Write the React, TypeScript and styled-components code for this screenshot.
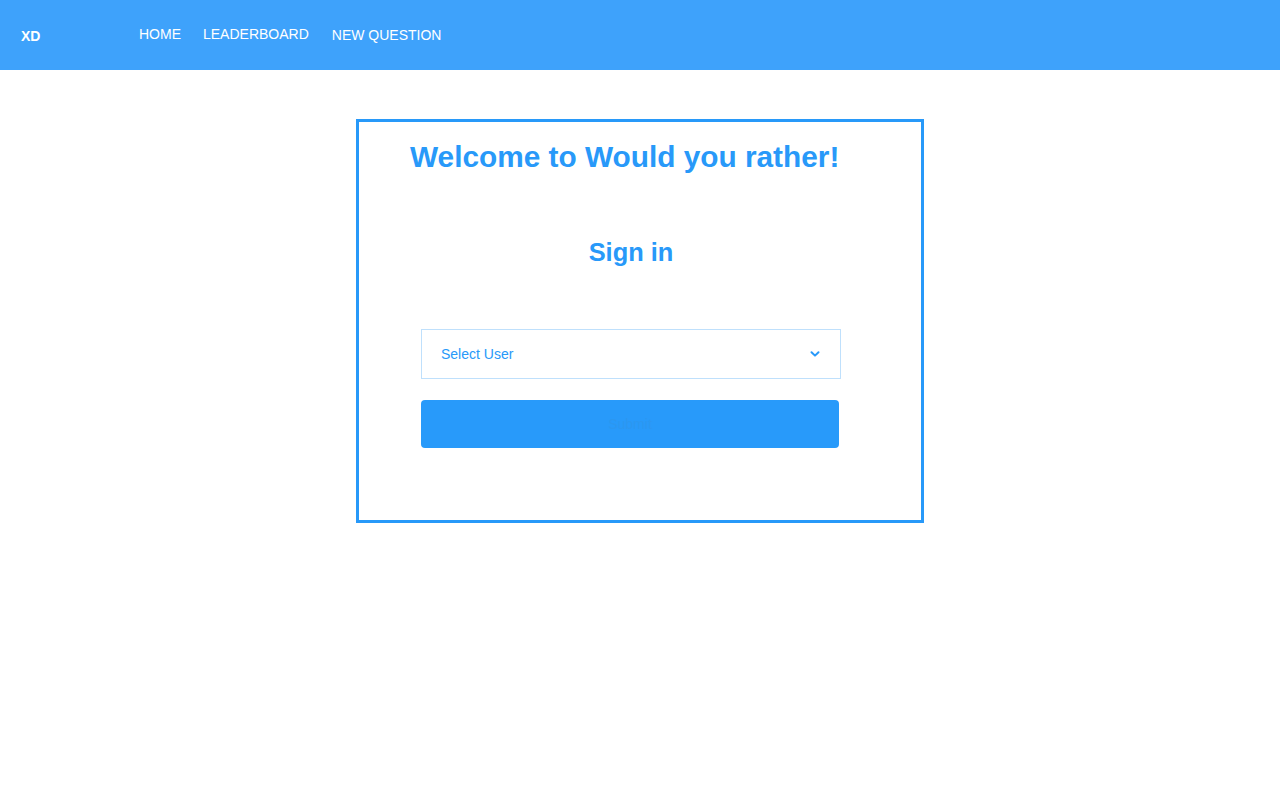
import React from "react";
import styled, { createGlobalStyle } from "styled-components";

const GlobalStyle = createGlobalStyle`
  html, body { margin: 0; padding: 0; background: #ffffff; }
  body { font-family: "Liberation Sans", Arial, Helvetica, sans-serif; }
  * { box-sizing: border-box; }
`;

const NavBar = styled.nav`
  height: 70px;
  background: #3ea2fb;
  display: flex;
  align-items: center;
  padding-left: 21px;
`;

const Logo = styled.div`
  width: 118px;
  color: #ffffff;
  font-weight: 700;
  font-size: 14px;
  line-height: 16px;
  padding-top: 1px;
`;

const NavLinks = styled.ul`
  display: flex;
  gap: 22px;
  list-style: none;
  margin: 0;
  padding: 0;
`;

const NavLink = styled.li<{ $dy?: number; $dx?: number }>`
  color: #ffffff;
  font-size: 14px;
  line-height: 16px;
  margin-top: ${(p) => p.$dy ?? 0}px;
  margin-left: ${(p) => p.$dx ?? 0}px;
  cursor: pointer;
`;

const Main = styled.main`
  display: flex;
  justify-content: center;
  padding-top: 49px;
`;

const Card = styled.section`
  width: 568px;
  height: 404px;
  border: 3px solid #2899f9;
  display: flex;
  flex-direction: column;
  padding-top: 18px;
`;

const Title = styled.h1`
  margin: 0 0 0 51px;
  color: #2899f9;
  font-size: 29.8px;
  line-height: 34px;
  font-weight: 700;
`;

const Form = styled.div`
  margin: 63px 0 0 62px;
  width: 420px;
  display: flex;
  flex-direction: column;
`;

const SubTitle = styled.h2`
  margin: 0;
  color: #2899f9;
  font-size: 25.4px;
  line-height: 30px;
  font-weight: 700;
  text-align: center;
`;

const SelectBox = styled.div`
  margin-top: 62px;
  height: 50px;
  border: 1px solid #bfe0fc;
  display: flex;
  align-items: center;
  justify-content: space-between;
  padding: 0 19px 0 19px;
  color: #2899f9;
  font-size: 14px;
`;

const Button = styled.button`
  margin-top: 21px;
  width: 418px;
  height: 48px;
  border: none;
  border-radius: 4px;
  background: #289afa;
  color: #2c97f0;
  font-family: "Liberation Sans", Arial, sans-serif;
  font-size: 14px;
  cursor: pointer;
`;

const Chevron = () => (
  <svg width="12" height="12" viewBox="0 0 12 12" aria-hidden="true">
    <path d="M2.5 4.2 L6 7.6 L9.5 4.2" fill="none" stroke="#2899f9" strokeWidth="2" strokeLinecap="round" strokeLinejoin="round" />
  </svg>
);

export default function App() {
  return (
    <>
      <GlobalStyle />
      <NavBar>
        <Logo>XD</Logo>
        <NavLinks>
          <NavLink $dy={-1}>HOME</NavLink>
          <NavLink $dy={-1}>LEADERBOARD</NavLink>
          <NavLink $dx={1}>NEW QUESTION</NavLink>
        </NavLinks>
      </NavBar>
      <Main>
        <Card>
          <Title>Welcome to Would you rather!</Title>
          <Form>
            <SubTitle>Sign in</SubTitle>
            <SelectBox>
              <span>Select User</span>
              <Chevron />
            </SelectBox>
            <Button>Submit</Button>
          </Form>
        </Card>
      </Main>
    </>
  );
}
